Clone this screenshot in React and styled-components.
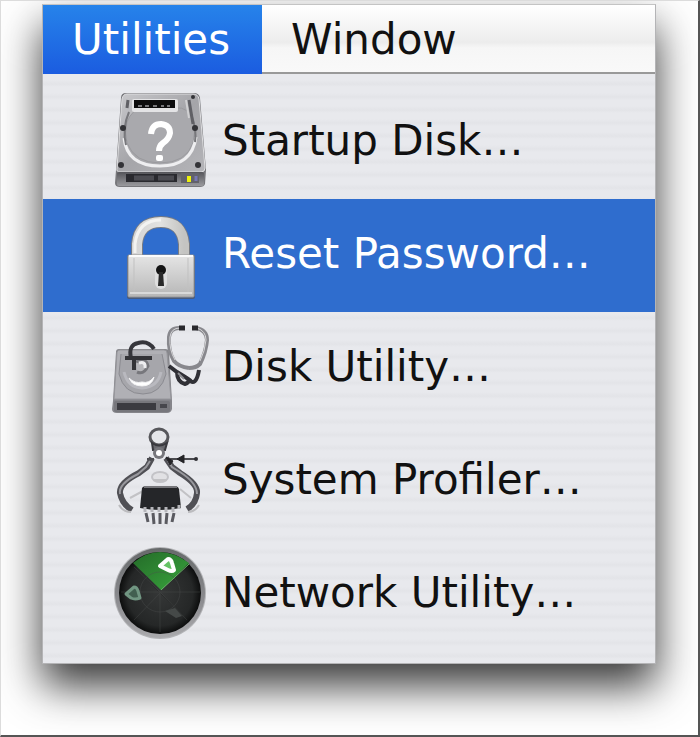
import React from "react";
import styled, { createGlobalStyle } from "styled-components";

const StartupDiskIcon = () => (
  <Icon viewBox="0 0 100 113" aria-hidden="true">
    <defs>
      <linearGradient id="diskTop" x1="0" y1="0" x2="1" y2="1">
        <stop offset="0" stopColor="#c9c9cc" />
        <stop offset="0.5" stopColor="#a5a5a9" />
        <stop offset="1" stopColor="#b4b4b8" />
      </linearGradient>
      <linearGradient id="diskFront" x1="0" y1="0" x2="0" y2="1">
        <stop offset="0" stopColor="#55555a" />
        <stop offset="1" stopColor="#9a9a9e" />
      </linearGradient>
    </defs>
    <path d="M6 84 L11 12 Q11 7 16 7 L84 7 Q89 7 90 12 L96 84 L95 98 Q94 101 90 101 L10 101 Q5 101 5 97 Z" fill="#77777b" />
    <path d="M7 82 L12 13 Q13 8 17 8 L83 8 Q88 8 89 13 L95 82 Q95 86 91 86 L10 86 Q6 86 7 82 Z" fill="url(#diskTop)" stroke="#dedee0" strokeWidth="1" />
    <path d="M17 36 Q14 47 17 57 Q25 77 50 77 Q76 77 83 57 Q86 47 83 36 Q79 20 65 22 L33 22 Q22 23 17 36 Z" fill="#a9a9ad" stroke="#9a9a9e" />
    <path d="M14 52 Q17 80 50 80 Q82 80 86 51" fill="none" stroke="#eeeef0" strokeWidth="3" />
    <path d="M19 26 Q12 42 16 59 M81 28 Q87 43 85 56" fill="none" stroke="#77777b" strokeWidth="2" />
    <rect x="22" y="13" width="46" height="13" rx="2" fill="#e3e3e5" />
    <rect x="24" y="14" width="41" height="8" fill="#0c0c0d" />
    <path d="M28 20 h4 m3 0 h4 m4 0 h4 m4 0 h3 m3 0 h3" stroke="#77777a" strokeWidth="2" />
    <path d="M18 14 L17 22 M79 14 L83 38" stroke="#606065" strokeWidth="3" />
    <path d="M76 14 L79 32" stroke="#d0d0d2" strokeWidth="2" />
    <g fill="#333337">
      <circle cx="13" cy="42" r="3" />
      <circle cx="85" cy="42" r="3" />
      <circle cx="11" cy="79" r="3" />
      <circle cx="88" cy="79" r="3" />
      <circle cx="83" cy="11" r="2" />
    </g>
    <path d="M41 48 Q42 38 51 38 Q60 39 60 47 Q59 53 53 57 Q49 60 49 65" fill="none" stroke="#fff" strokeWidth="6" />
    <rect x="46" y="69" width="7" height="6" rx="2" fill="#fff" />
    <rect x="7" y="86" width="87" height="14" rx="2" fill="url(#diskFront)" />
    <rect x="16" y="88" width="51" height="8" fill="#29292e" />
    <path d="M24 92 h20 M48 92 h16" stroke="#4c4c52" strokeWidth="5" />
    <rect x="71" y="87" width="18" height="10" fill="#62626b" />
    <rect x="77" y="90" width="4" height="6" fill="#edf20c" />
    <path d="M86 90 v5" stroke="#7777b5" strokeWidth="3" />
  </Icon>
);

const PadlockIcon = () => (
  <Icon viewBox="0 0 100 113" aria-hidden="true">
    <defs>
      <linearGradient id="lockBody" x1="0" y1="0" x2="0" y2="1">
        <stop offset="0" stopColor="#e5e5e5" />
        <stop offset="0.45" stopColor="#d0d0d0" />
        <stop offset="1" stopColor="#b6b6b6" />
      </linearGradient>
      <linearGradient id="lockArch" x1="0" y1="0" x2="1" y2="0">
        <stop offset="0" stopColor="#d6d6d6" />
        <stop offset="0.5" stopColor="#e2e2e0" />
        <stop offset="1" stopColor="#c4c4c2" />
      </linearGradient>
    </defs>
    <path d="M27 58 V45 Q29 23 51 23 Q72 23 74 45 V58" fill="none" stroke="#777b83" strokeWidth="12" />
    <path d="M27 58 V45 Q29 23 51 23 Q72 23 74 45 V58" fill="none" stroke="url(#lockArch)" strokeWidth="10" />
    <path d="M25 54 V45 Q28 21 51 21" fill="none" stroke="#f3f3f1" strokeWidth="3" />
    <rect x="17" y="56" width="68" height="44" rx="2" fill="#485a7c" />
    <rect x="18" y="56" width="66" height="42" rx="1" fill="url(#lockBody)" stroke="#969696" />
    <path d="M19 57 H83" stroke="#fbfbfb" strokeWidth="2" />
    <path d="M24 59 V95 M78 59 V95" stroke="#c1c1c1" />
    <path d="M20 94 H82" stroke="#d9d9d9" strokeWidth="2" />
    <rect x="45" y="66" width="12" height="24" rx="6" fill="#dedede" />
    <circle cx="51" cy="71" r="5" fill="#141414" />
    <path d="M49 73 H53 L54 87 H48 Z" fill="#292929" />
  </Icon>
);

const DiskUtilityIcon = () => (
  <Icon viewBox="0 0 100 113" aria-hidden="true">
    <path d="M3 89 L6 40 Q6 37 9 37 L55 37 Q59 37 59 40 L62 89 V97 Q61 101 57 101 H7 Q2 101 2 97 Z" fill="#85858a" />
    <path d="M4 87 L7 40 Q8 38 10 38 L54 38 Q57 38 57 41 L61 87 Z" fill="#b0b0b5" stroke="#96969b" />
    <path d="M11 42 L9 62 Q14 82 33 82 Q51 82 56 62 L52 42" fill="#a6a6ab" stroke="#8b8b91" />
    <path d="M14 60 Q18 76 32 76 Q48 75 51 60" fill="none" stroke="#b9b9bf" strokeWidth="3" />
    <path d="M19 66 Q25 72 32 70 Q39 72 44 65 Q42 74 32 74 Q22 74 19 66 Z" fill="#fff" stroke="#f4f4f6" />
    <path d="M26 50 Q36 45 38 54 Q34 63 27 60" fill="#b7b7bb" stroke="#77777c" strokeWidth="3" />
    <path d="M29 51 Q36 49 35 56" stroke="#eeeef0" strokeWidth="3" fill="none" />
    <path d="M21 46 Q18 33 28 31 Q38 28 44 37" fill="none" stroke="#36363b" strokeWidth="4" />
    <path d="M15 46 H42 M24 47 V58" stroke="#333337" strokeWidth="4" />
    <rect x="4" y="89" width="56" height="11" rx="2" fill="#77777c" />
    <rect x="7" y="91" width="39" height="7" fill="#3b3b40" />
    <path d="M50 94 H57" stroke="#47474c" strokeWidth="4" />
    <path d="M71 16 Q60 15 59 25 Q58 39 64 49 Q69 55 79 56" fill="none" stroke="#88888d" strokeWidth="4" />
    <path d="M86 16 Q97 18 97 28 Q96 40 90 52 Q86 56 79 56" fill="none" stroke="#88888d" strokeWidth="4" />
    <path d="M70 16 Q61 16 60 25 Q59 38 65 48 M87 16 Q96 19 96 28 Q95 39 90 49" fill="none" stroke="#d6d6d8" strokeWidth="1" />
    <path d="M69 16 H75 M82 16 H88" stroke="#29292d" strokeWidth="5" />
    <path d="M59 54 L67 60 Q77 66 81 69 M67 60 Q67 70 75 72 Q79 71 79 67 M78 67 Q86 76 89 58" fill="none" stroke="#303036" strokeWidth="4" />
    <path d="M68 61 L74 67" stroke="#8e8e93" strokeWidth="2" />
  </Icon>
);

const ProfilerIcon = () => (
  <Icon viewBox="0 0 100 113" aria-hidden="true">
    <path d="M42 33 L37 42 L29 48 Q9 58 10 68 Q12 79 22 85" fill="none" stroke="#505055" strokeWidth="6" />
    <path d="M56 33 L62 42 L70 48 Q88 59 87 68 Q86 79 77 84" fill="none" stroke="#505055" strokeWidth="6" />
    <path d="M40 36 L36 42 L28 49 Q8 59 10 69 M58 36 L62 42 L70 47 Q87 58 87 69" fill="none" stroke="#98989d" strokeWidth="2" />
    <path d="M9 80 Q13 87 21 87 M89 80 Q85 87 78 87" fill="none" stroke="#bcbcbf" strokeWidth="2" />
    <ellipse cx="49" cy="12" rx="9" ry="8" fill="#e5e6e9" stroke="#57575b" strokeWidth="3" />
    <path d="M42 18 Q49 23 57 18 L55 25 H43 Z" fill="#69696e" stroke="#39393e" strokeWidth="2" />
    <circle cx="49" cy="28" r="6" fill="#77777c" />
    <circle cx="49" cy="28" r="3" fill="#fff" />
    <path d="M37 34 H44 M55 34 H86" stroke="#4c4c50" strokeWidth="2" />
    <path d="M56 32 L63 36 L60 40 Z M67 34 L74 30 V38 Z" fill="#242427" stroke="#242427" />
    <circle cx="86" cy="34" r="2" fill="#303034" />
    <ellipse cx="50" cy="52" rx="8" ry="5" fill="#e1e1e4" stroke="#c3c3c7" strokeWidth="2" />
    <path d="M43 55 H57 M20 73 L33 66 M70 64 L81 73" stroke="#c2c2c5" strokeWidth="2" />
    <path d="M32 63 Q33 61 37 61 H64 Q68 61 69 64 L71 83 Q50 87 30 83 Z" fill="#252629" />
    <path d="M34 62 H67" stroke="#77777b" strokeWidth="2" />
    <path d="M35 82 V87 M42 82 V87 M49 82 V87 M56 82 V87 M63 82 V87 M69 80 V84" stroke="#b5b5ba" strokeWidth="3" />
    <path d="M36 88 L38 97 M43 88 L44 99 M50 88 V99 M57 88 L56 99 M64 88 L62 97" stroke="#5a5a60" strokeWidth="3" />
  </Icon>
);

const RadarIcon = () => (
  <Icon viewBox="0 0 100 113" aria-hidden="true">
    <defs>
      <linearGradient id="radarRim" x1="0" y1="0" x2="0" y2="1">
        <stop offset="0" stopColor="#66696a" />
        <stop offset="0.6" stopColor="#8d8d91" />
        <stop offset="1" stopColor="#aaaaad" />
      </linearGradient>
      <radialGradient id="radarFace">
        <stop offset="0" stopColor="#353737" />
        <stop offset="0.8" stopColor="#252727" />
        <stop offset="1" stopColor="#0c0d0d" />
      </radialGradient>
      <linearGradient id="radarBeam" x1="0" y1="0" x2="1" y2="1">
        <stop offset="0" stopColor="#246b29" />
        <stop offset="1" stopColor="#39a53d" />
      </linearGradient>
    </defs>
    <circle cx="50" cy="55" r="46" fill="#b3b4b7" />
    <circle cx="50" cy="55" r="45" fill="url(#radarRim)" />
    <circle cx="50" cy="55" r="41" fill="url(#radarFace)" />
    <path d="M51 52 L23 25 Q49 3 79 25 Z" fill="url(#radarBeam)" />
    <path d="M51 52 L79 26" stroke="#68b865" />
    <path d="M50 54 V94 M11 54 H90 M24 29 L50 54 L77 82 M51 54 L24 82" stroke="#4b4e4d" strokeWidth="1" opacity="0.4" />
    <circle cx="50" cy="54" r="20" fill="none" stroke="#4b4e4d" opacity="0.4" />
    <path d="M50 28 L58 21 Q61 21 62 25 L64 32 Q62 34 58 32 Z" fill="#66c365" stroke="#fff" strokeWidth="4" strokeLinejoin="round" />
    <path d="M16 56 L24 49 Q27 49 28 53 L30 60 Q25 62 21 60 Z" fill="#425f50" stroke="#719682" strokeWidth="3" strokeLinejoin="round" />
    <path d="M55 73 L65 70 L72 78 L66 80 Z" fill="#454948" />
  </Icon>
);

const items = [
  { name: "Startup Disk…", icon: <StartupDiskIcon /> },
  { name: "Reset Password…", icon: <PadlockIcon />, selected: true },
  { name: "Disk Utility…", icon: <DiskUtilityIcon /> },
  { name: "System Profiler…", icon: <ProfilerIcon /> },
  { name: "Network Utility…", icon: <RadarIcon /> },
];

const App = () => {
  return (
    <Page>
      <GlobalStyle />
      <Panel>
        <MenuBar>
          <MenuTitle $open>Utilities</MenuTitle>
          <MenuTitle>Window</MenuTitle>
        </MenuBar>
        <Menu>
          {items.map(({ name, icon, selected }) => (
            <li key={name}>
              <MenuItem $selected={selected}>
                {icon}
                <span>{name}</span>
              </MenuItem>
            </li>
          ))}
        </Menu>
      </Panel>
    </Page>
  );
};

export default App;

const GlobalStyle = createGlobalStyle`
  * {
    box-sizing: border-box;
  }
  body {
    margin: 0;
    background: #fff;
    font-family: "DejaVu Sans", "Lucida Grande", sans-serif;
  }
  button {
    font-family: inherit;
    font-size: 42px;
    border: none;
    text-align: left;
    white-space: nowrap;
  }
`;

const Page = styled.main`
  padding: 3px 42px 71px 41px;
  border: 1px solid #dcdcdc;
  border-right: 2px solid #555;
  border-bottom: 2px solid #555;
  overflow: hidden;
`;

const Panel = styled.div`
  border: 1px solid #b4b4b6;
  border-top-color: #c4c4c4;
  box-shadow: 0 22px 40px rgba(0, 0, 0, 0.78);
`;

const MenuBar = styled.nav`
  display: flex;
  height: 69px;
  background: linear-gradient(#fff 0%, #f0f0f0 45%, #ececec 54%, #f6f6f6 62%, #f9f9f9 100%);
  box-shadow: inset 0 -2px #999;
`;

const MenuTitle = styled.button`
  padding: 0 32px 0 29px;
  line-height: 64px;
  color: ${({ $open }) => ($open ? "#fff" : "#111")};
  background: ${({ $open }) => ($open ? "linear-gradient(#2683ea, #1b5ce0)" : "none")};
`;

const Menu = styled.ul`
  margin: 0;
  padding: 12px 0;
  list-style: none;
  background: repeating-linear-gradient(#e8e9ed 0 6px, #e3e4e8 10px, #e8e9ed 13px);
`;

const MenuItem = styled.button`
  display: flex;
  align-items: center;
  gap: 12px;
  width: 100%;
  height: 113px;
  padding: 0 0 0 67px;
  line-height: 60px;
  color: ${({ $selected }) => ($selected ? "#fff" : "#111")};
  background: ${({ $selected }) => ($selected ? "#2f6dce" : "none")};

  span {
    padding-bottom: 4px;
  }
`;

const Icon = styled.svg`
  flex: none;
  width: 100px;
  height: 113px;
`;
